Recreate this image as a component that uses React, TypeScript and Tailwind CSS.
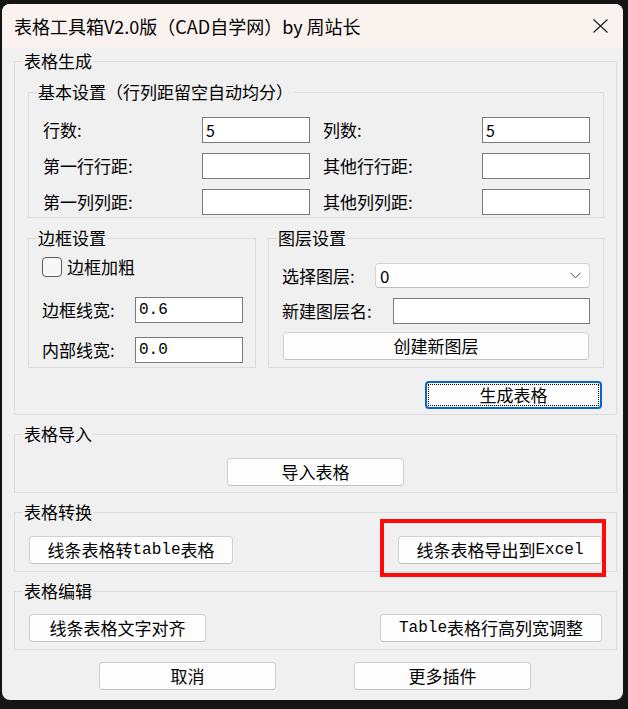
import React from "react";

const cjk = "[font-family:'Noto_Sans_CJK_SC','Noto_Sans',sans-serif]";

function Legend({ children }: { children: React.ReactNode }) {
  return (
    <legend className="ml-[8px] px-[1px] text-[17px] leading-[22px] text-black">
      {children}
    </legend>
  );
}

function Mono({ children }: { children: React.ReactNode }) {
  return (
    <span className="[font-family:'Liberation_Mono',monospace] text-[16px]">
      {children}
    </span>
  );
}

function Btn({
  children,
  w,
}: {
  children: React.ReactNode;
  w: string;
}) {
  return (
    <div
      className={`${w} h-[28px] flex items-center justify-center rounded-[4px] border border-[#d0d0d0] border-b-[#c2c2c2] bg-[#fdfdfd] text-[17px] leading-[22px] text-black`}
    >
      {children}
    </div>
  );
}

function Box({ w, children }: { w: string; children?: React.ReactNode }) {
  return (
    <div
      className={`${w} h-[26px] flex items-center border border-[#7a7a7a] bg-white pl-[3px] text-black`}
    >
      {children}
    </div>
  );
}

export default function App() {
  return (
    <div className={`w-[628px] h-[709px] bg-[#141414] pl-[2px] pt-[4px] ${cjk}`}>
      <div className="w-[621px] h-[696px] rounded-[8px] overflow-hidden bg-[#f0f0f0] flex flex-col">
        {/* title bar */}
        <div className="h-[44px] bg-[#f9f2ee] flex items-center justify-between pl-[12px] pr-[15px]">
          <span className="text-[18px] leading-[24px] text-black">
            表格工具箱V2.0版（CAD自学网）by 周站长
          </span>
          <svg width="15" height="14" viewBox="0 0 15 14">
            <path d="M0.5 0.5 L14.5 13.5 M14.5 0.5 L0.5 13.5" stroke="#1a1a1a" strokeWidth="1.1" fill="none" />
          </svg>
        </div>

        {/* body */}
        <div className="pl-[12px] pt-[2px] flex flex-col">
          {/* 表格生成 */}
          <fieldset className="w-[603px] border border-[#dcdcdc]">
            <Legend>表格生成</Legend>
            <div className="pl-[13px] flex flex-col">
              {/* 基本设置 */}
              <fieldset className="mt-[9px] w-[576px] border border-[#dcdcdc]">
                <Legend>基本设置（行列距留空自动均分）</Legend>
                <div className="pt-[14px] pb-[2px] pl-[14px] flex flex-col gap-[10px] text-[17px] leading-[26px] text-black">
                  <div className="flex items-center h-[26px]">
                    <span className="w-[159px]">行数:</span>
                    <Box w="w-[108px]">
                      <span className="text-[16px] pl-[0px]">5</span>
                    </Box>
                    <span className="ml-[13px] w-[159px]">列数:</span>
                    <Box w="w-[108px]">
                      <span className="text-[16px]">5</span>
                    </Box>
                  </div>
                  <div className="flex items-center h-[26px]">
                    <span className="w-[159px]">第一行行距:</span>
                    <Box w="w-[108px]" />
                    <span className="ml-[13px] w-[159px]">其他行行距:</span>
                    <Box w="w-[108px]" />
                  </div>
                  <div className="flex items-center h-[26px]">
                    <span className="w-[159px]">第一列列距:</span>
                    <Box w="w-[108px]" />
                    <span className="ml-[13px] w-[159px]">其他列列距:</span>
                    <Box w="w-[108px]" />
                  </div>
                </div>
              </fieldset>

              {/* 边框设置 / 图层设置 */}
              <div className="mt-[9px] w-[576px] flex gap-[12px] items-stretch">
                <fieldset className="w-[228px] border border-[#dcdcdc]">
                  <Legend>边框设置</Legend>
                  <div className="pl-[13px] pt-[8px] pb-[4px] flex flex-col text-[17px] leading-[26px] text-black">
                    <div className="h-[20px] flex items-center gap-[5px]">
                      <div className="w-[20px] h-[20px] rounded-[4px] border border-[#5e5e5e] bg-[#f7f7f7]" />
                      <span>边框加粗</span>
                    </div>
                    <div className="mt-[20px] h-[26px] flex items-center">
                      <span className="w-[93px]">边框线宽:</span>
                      <Box w="w-[108px]">
                        <Mono>0.6</Mono>
                      </Box>
                    </div>
                    <div className="mt-[14px] h-[26px] flex items-center">
                      <span className="w-[93px]">内部线宽:</span>
                      <Box w="w-[108px]">
                        <Mono>0.0</Mono>
                      </Box>
                    </div>
                  </div>
                </fieldset>

                <fieldset className="w-[336px] border border-[#dcdcdc]">
                  <Legend>图层设置</Legend>
                  <div className="pl-[13px] pt-[14px] pb-[7px] flex flex-col text-[17px] leading-[26px] text-black">
                    <div className="h-[25px] flex items-center">
                      <span className="w-[93px]">选择图层:</span>
                      <div className="w-[215px] h-[25px] flex items-center justify-between rounded-[4px] border border-[#d4d4d4] border-b-[#bdbdbd] bg-[#fefefe] pl-[4px] pr-[8px]">
                        <span className="text-[17px]">0</span>
                        <svg width="11" height="7" viewBox="0 0 11 7">
                          <path d="M0.5 0.8 L5.5 5.8 L10.5 0.8" stroke="#444" strokeWidth="1" fill="none" />
                        </svg>
                      </div>
                    </div>
                    <div className="mt-[10px] h-[26px] flex items-center">
                      <span className="w-[111px]">新建图层名:</span>
                      <Box w="w-[197px]" />
                    </div>
                    <div className="mt-[8px] ml-[1px]">
                      <Btn w="w-[306px]">创建新图层</Btn>
                    </div>
                  </div>
                </fieldset>
              </div>

              <div className="mt-[13px] pb-[5px] pr-[14px] flex justify-end">
                <div className="w-[177px] h-[28px] rounded-[4px] border-2 border-[#0a64c8] bg-[#fdfdfd] p-[1px] flex">
                  <div className="flex-1 border border-dotted border-black flex items-center justify-center text-[17px] leading-[22px] text-black">
                    生成表格
                  </div>
                </div>
              </div>
            </div>
          </fieldset>

          {/* 表格导入 */}
          <fieldset className="mt-[8px] w-[603px] border border-[#dcdcdc]">
            <Legend>表格导入</Legend>
            <div className="pt-[13px] pb-[6px] flex justify-center">
              <Btn w="w-[177px]">导入表格</Btn>
            </div>
          </fieldset>

          {/* 表格转换 */}
          <fieldset className="mt-[8px] w-[603px] border border-[#dcdcdc]">
            <Legend>表格转换</Legend>
            <div className="pt-[13px] pb-[7px] pl-[14px] pr-[14px] flex justify-between">
              <Btn w="w-[204px]">
                线条表格转<Mono>table</Mono>表格
              </Btn>
              <div className="relative">
                <Btn w="w-[204px]">
                  线条表格导出到<Mono>Excel</Mono>
                </Btn>
                <div className="absolute -left-[18px] -right-[4px] -top-[17px] -bottom-[13px] border-4 border-[#fe0a0a]" />
              </div>
            </div>
          </fieldset>

          {/* 表格编辑 */}
          <fieldset className="mt-[8px] w-[603px] border border-[#dcdcdc]">
            <Legend>表格编辑</Legend>
            <div className="pt-[12px] pb-[7px] pl-[14px] pr-[14px] flex justify-between">
              <Btn w="w-[177px]">线条表格文字对齐</Btn>
              <Btn w="w-[222px]">
                <Mono>Table</Mono>表格行高列宽调整
              </Btn>
            </div>
          </fieldset>

          <div className="mt-[12px] pl-[85px] flex gap-[78px]">
            <Btn w="w-[177px]">取消</Btn>
            <Btn w="w-[177px]">更多插件</Btn>
          </div>
        </div>
      </div>
    </div>
  );
}
